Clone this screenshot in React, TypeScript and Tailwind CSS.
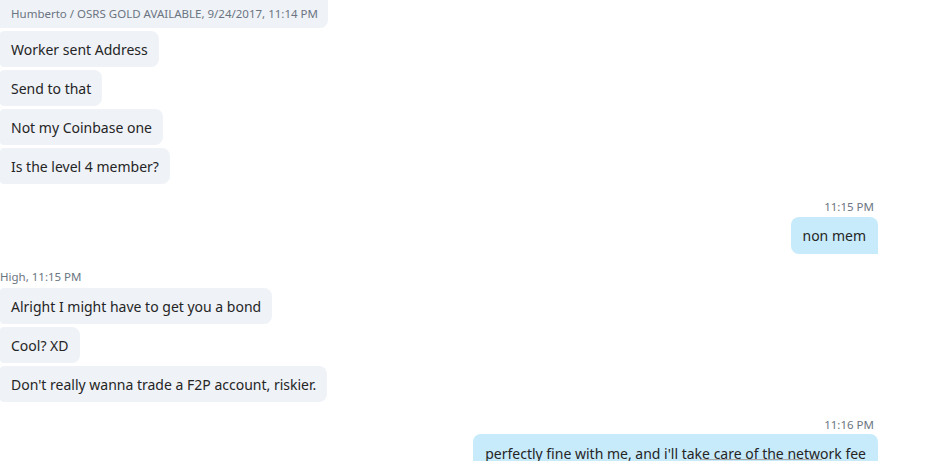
import React from 'react';

type Msg = { text: string };

const Incoming = ({ text }: Msg) => (
  <div className="flex">
    <div className="bg-[#eff2f7] rounded-r-lg rounded-l-sm px-[11px] h-[36px] flex items-center text-[14px] text-[#252525]">
      {text}
    </div>
  </div>
);

const Outgoing = ({ text }: Msg) => (
  <div className="flex justify-end pr-[60px]">
    <div className="bg-[#c7ebfb] rounded-t-lg rounded-bl-lg px-[12px] h-[37px] flex items-center text-[14px] text-[#252525]">
      {text}
    </div>
  </div>
);

const Meta = ({ text, right }: { text: string; right?: boolean }) => (
  <div className={right ? 'flex justify-end pr-[64px] text-[11.5px] text-[#6b7582] leading-[14px]' : 'text-[11.5px] text-[#6b7582] leading-[14px]'}>
    {text}
  </div>
);

export default function App() {
  return (
    <div
      className="relative w-[938px] h-[461px] overflow-hidden bg-white"
      style={{ fontFamily: '"Segoe UI", "Noto Sans", "Open Sans", sans-serif' }}
    >
      <div className="flex flex-col -mt-[26px]">
        {/* first bubble is scrolled mostly out of view */}
        <div className="flex">
          <div className="bg-[#eff2f7] rounded-r-lg px-[11px] pt-[7px] pb-[6px] w-[328px] text-[#252525]">
            <div className="text-[14px] leading-[20px]">so pay the guy you talk to</div>
            <div className="mt-[5px] text-[11.5px] text-[#6b7582] leading-[16px] whitespace-nowrap">
              Humberto / OSRS GOLD AVAILABLE, 9/24/2017, 11:14 PM
            </div>
          </div>
        </div>
        <div className="flex flex-col gap-[3px] mt-[3px]">
          <Incoming text="Worker sent Address" />
          <Incoming text="Send to that" />
          <Incoming text="Not my Coinbase one" />
          <Incoming text="Is the level 4 member?" />
        </div>

        <div className="mt-[16px]">
          <Meta text="11:15 PM" right />
        </div>
        <div className="mt-[3px]">
          <Outgoing text="non mem" />
        </div>

        <div className="mt-[16px]">
          <Meta text="High, 11:15 PM" />
        </div>
        <div className="flex flex-col gap-[3px] mt-[4px]">
          <Incoming text="Alright I might have to get you a bond" />
          <Incoming text="Cool? XD" />
          <Incoming text="Don't really wanna trade a F2P account, riskier." />
        </div>

        <div className="mt-[16px]">
          <Meta text="11:16 PM" right />
        </div>
        <div className="flex justify-end pr-[60px] mt-[2px]">
          <div className="bg-[#c7ebfb] rounded-t-lg px-[12px] pt-[9px] h-[40px] text-[14px] text-[#252525]">
            perfectly fine with me, and i'll take care of the network fee
          </div>
        </div>
      </div>
      <div className="absolute left-[700px] top-[459px] w-[122px] h-[1px] bg-[#a9a9a9]" />
    </div>
  );
}
